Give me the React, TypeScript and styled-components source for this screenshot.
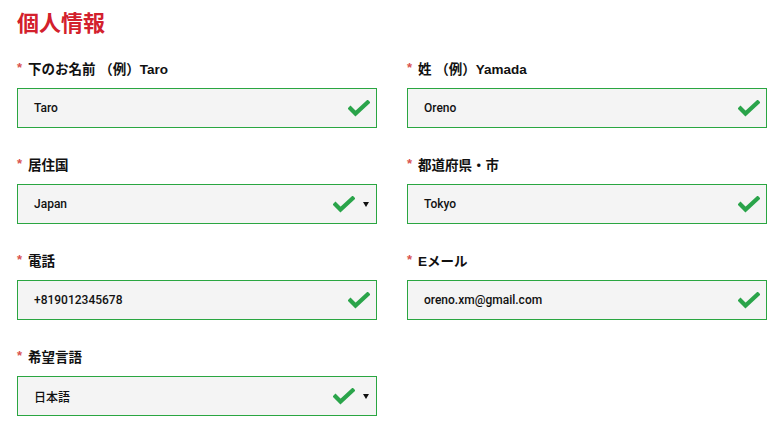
import React from "react";
import styled, { createGlobalStyle } from "styled-components";

const Global = createGlobalStyle`
  html, body { margin: 0; padding: 0; background: #ffffff; }
  body { font-family: "Liberation Sans", Arial, "Noto Sans CJK JP", sans-serif; color: #111; }
`;

const Page = styled.div`
  padding: 8px 13px 0 17px;
  width: 780px;
  box-sizing: border-box;
`;

const Title = styled.h1`
  margin: 0;
  font-size: 22px;
  line-height: 32px;
  font-weight: 700;
  color: #d3202c;
  font-family: "Liberation Sans", "Noto Sans CJK JP", sans-serif;
`;

const Grid = styled.div`
  margin-top: 18px;
  display: grid;
  grid-template-columns: 360px 360px;
  column-gap: 30px;
  row-gap: 26px;
`;

const Field = styled.div`
  display: flex;
  flex-direction: column;
  gap: 10px;
`;

const Label = styled.label`
  display: flex;
  align-items: center;
  height: 20px;
  font-size: 13.5px;
  font-weight: 700;
  color: #111;
  font-family: "Liberation Sans", "Noto Sans CJK JP", sans-serif;
`;

const Star = styled.span`
  color: #d9534f;
  font-size: 13px;
  font-weight: 700;
  width: 11px;
  margin-top: -2px;
`;

const Box = styled.div`
  height: 40px;
  box-sizing: border-box;
  border: 1px solid #2aa641;
  background: #f4f4f4;
  display: flex;
  align-items: center;
  padding: 0 6px 0 16px;
`;

const Value = styled.span`
  flex: 1;
  font-size: 12px;
  font-weight: 500;
  font-family: Roboto, "Liberation Sans", "Noto Sans CJK JP", sans-serif;
  color: #111;
`;

const Arrow = styled.span`
  width: 0;
  height: 0;
  border-left: 3px solid transparent;
  border-right: 3px solid transparent;
  border-top: 5px solid #111;
  margin-left: 8px;
  margin-right: 1px;
`;

const Check = () => (
  <svg width="22" height="17" viewBox="0 0 22 17">
    <polyline
      points="2.5,8.5 7.5,13.5 19.5,2.5"
      fill="none"
      stroke="#2aa44a"
      strokeWidth="4.2"
      strokeLinecap="square"
    />
  </svg>
);

type FieldProps = { label: string; value: string; select?: boolean };

const FormField = ({ label, value, select }: FieldProps) => (
  <Field>
    <Label>
      <Star>*</Star>
      {label}
    </Label>
    <Box>
      <Value>{value}</Value>
      <Check />
      {select && <Arrow />}
    </Box>
  </Field>
);

export default function App() {
  return (
    <Page>
      <Global />
      <Title>個人情報</Title>
      <Grid>
        <FormField label="下のお名前 （例）Taro" value="Taro" />
        <FormField label="姓 （例）Yamada" value="Oreno" />
        <FormField label="居住国" value="Japan" select />
        <FormField label="都道府県・市" value="Tokyo" />
        <FormField label="電話" value="+819012345678" />
        <FormField label="Eメール" value="oreno.xm@gmail.com" />
        <FormField label="希望言語" value="日本語" select />
      </Grid>
    </Page>
  );
}
